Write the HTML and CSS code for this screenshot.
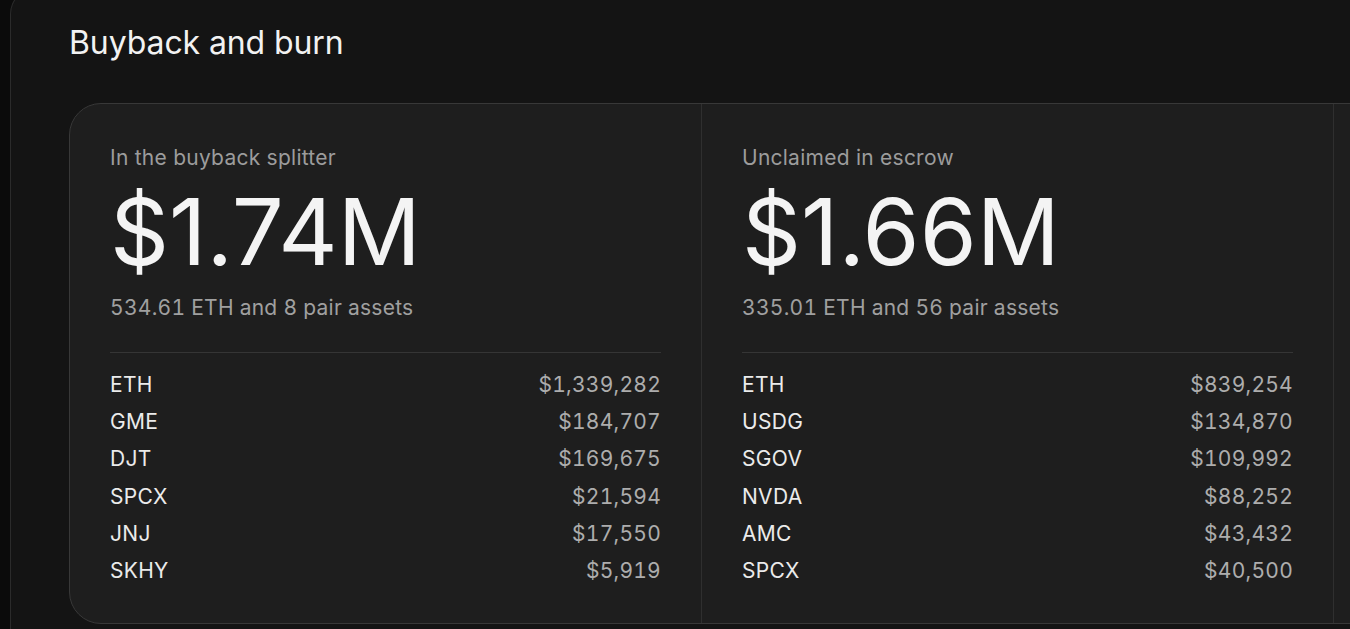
FILE: index.html
```html
<!DOCTYPE html>
<html lang="en">
<head>
<meta charset="utf-8">
<title>Buyback and burn</title>
<link rel="stylesheet" href="styles.css">
</head>
<body>
<div class="panel">
  <h1 class="title">Buyback and burn</h1>
  <div class="card">
    <section class="cell">
      <div class="label">In the buyback splitter</div>
      <div class="big">$1.74M</div>
      <div class="sub">534.61 ETH and 8 pair assets</div>
      <div class="rule"></div>
      <ul class="rows">
        <li><span class="name">ETH</span><span class="val">$1,339,282</span></li>
        <li><span class="name">GME</span><span class="val">$184,707</span></li>
        <li><span class="name">DJT</span><span class="val">$169,675</span></li>
        <li><span class="name">SPCX</span><span class="val">$21,594</span></li>
        <li><span class="name">JNJ</span><span class="val">$17,550</span></li>
        <li><span class="name">SKHY</span><span class="val">$5,919</span></li>
      </ul>
    </section>
    <section class="cell">
      <div class="label">Unclaimed in escrow</div>
      <div class="big">$1.66M</div>
      <div class="sub">335.01 ETH and 56 pair assets</div>
      <div class="rule"></div>
      <ul class="rows">
        <li><span class="name">ETH</span><span class="val">$839,254</span></li>
        <li><span class="name">USDG</span><span class="val">$134,870</span></li>
        <li><span class="name">SGOV</span><span class="val">$109,992</span></li>
        <li><span class="name">NVDA</span><span class="val">$88,252</span></li>
        <li><span class="name">AMC</span><span class="val">$43,432</span></li>
        <li><span class="name">SPCX</span><span class="val">$40,500</span></li>
      </ul>
    </section>
    <section class="cell"></section>
  </div>
</div>
</body>
</html>
```
FILE: styles.css
```css
html, body {
  margin: 0;
  padding: 0;
  background: #0b0b0b;
  height: 100%;
  overflow: hidden;
}
body {
  font-family: Inter, "Noto Sans", sans-serif;
  color: #ececec;
}
.panel {
  margin: -12px 0 0 10px;
  height: 641px;
  background: #141414;
  border-left: 1px solid #2b2b2b;
  border-top: 1px solid #2b2b2b;
  border-top-left-radius: 26px;
  padding: 35px 0 0 58px;
  box-sizing: border-box;
  overflow: hidden;
}
.title {
  margin: 0;
  font-size: 32px;
  font-weight: 400;
  line-height: 38px;
  color: #f2f2f2;
  letter-spacing: -0.1px;
}
.card {
  margin-top: 41px;
  display: grid;
  grid-template-columns: 631px 632px 632px;
  width: max-content;
  background: #1e1e1e;
  border: 1px solid #383838;
  border-radius: 32px;
}
.cell {
  padding: 40px 40px 34px 40px;
  border-left: 1px solid #2f2f2f;
}
.cell:first-child {
  border-left: none;
}
.label {
  font-size: 21px;
  line-height: 28px;
  color: #9c9c9c;
  letter-spacing: 0.25px;
}
.big {
  margin-top: 14px;
  font-size: 92px;
  line-height: 92px;
  color: #f4f4f4;
  letter-spacing: 0;
}
.sub {
  margin-top: 16px;
  font-size: 21px;
  line-height: 28px;
  color: #a0a0a0;
  letter-spacing: 0.26px;
  font-variant-numeric: tabular-nums;
}
.rule {
  margin-top: 30px;
  height: 1px;
  background: #353535;
}
.rows {
  list-style: none;
  margin: 13px 0 0 0;
  padding: 0;
}
.rows li {
  display: flex;
  justify-content: space-between;
  font-size: 21px;
  line-height: 37.2px;
}
.name {
  color: #ebebeb;
  letter-spacing: 0.3px;
}
.val {
  color: #adadad;
  letter-spacing: 0.25px;
  font-variant-numeric: tabular-nums;
}
```
